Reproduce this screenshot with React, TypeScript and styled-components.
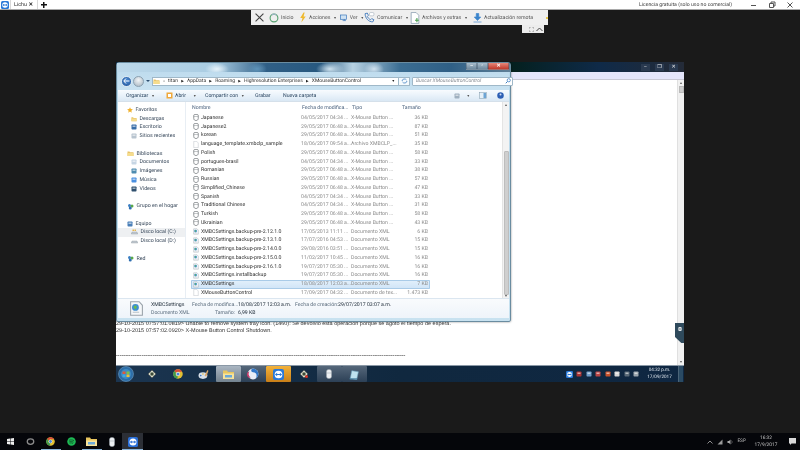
import React from "react";
import styled, { createGlobalStyle } from "styled-components";

const Global = createGlobalStyle`
  html, body { margin: 0; padding: 0; background: #1a1a1a; overflow: hidden; }
  * { box-sizing: border-box; }
`;

const UI = `Roboto, "Open Sans", "Liberation Sans", sans-serif`;

const Root = styled.div`
  width: 800px; height: 450px; background: #1a1a1a; display: flex; flex-direction: column;
  font-family: ${UI}; overflow: hidden; position: relative; filter: blur(0.38px);
  text-rendering: geometricPrecision;
`;

/* ---------- top bar of the remote-control app ---------- */
const TopBar = styled.div`
  height: 10px; flex: none; background: #fff; border-bottom: 1px solid #a9a9a9; display: flex; align-items: center;
`;
const AppLogo = styled.div`width: 10px; display: flex; justify-content: center;`;
const Tab = styled.div`
  width: 28px; height: 9px; border-left: 1px solid #d8d8d8; border-right: 1px solid #d8d8d8; display: flex; align-items: center;
  justify-content: space-between; padding: 0 4px 0 3px; font-size: 5.4px; color: #333; position: relative;
`;
const TabClose = styled.span`font-size: 5.5px; font-weight: 700; color: #222;`;
const PlusMark = styled.div`
  margin-left: 3px; width: 6px; height: 6px; flex: none;
  background: linear-gradient(#111, #111) center / 6px 1.5px no-repeat, linear-gradient(#111, #111) center / 1.5px 6px no-repeat;
`;
const Licence = styled.span`margin-left: auto; margin-right: 18px; font-size: 5.15px; color: #444;`;
const WinCtl = styled.div`display: flex; gap: 10px; padding-right: 6px; align-items: center;`;

/* ---------- stage ---------- */
const Stage = styled.div`flex: 1; position: relative;`;

const RemoteBar = styled.div`
  position: absolute; left: 251px; top: 0; width: 297px; height: 15px; background: #efefef;
  display: flex; align-items: center; padding-left: 4px; font-size: 5.2px; color: #555;
`;
const RemoteItem = styled.div<{ $w: number }>`
  width: ${(p) => p.$w}px; display: flex; align-items: center; gap: 2px; white-space: nowrap; flex: none;
`;
const Caret = styled.span<{ $push?: number }>`font-size: 3.6px; color: #555; margin-left: ${(p) => p.$push ?? 1}px;`;
const BarTab = styled.div`
  position: absolute; left: 271px; top: 15px; width: 22px; height: 8px; background: #ececec;
  display: flex; align-items: center; justify-content: flex-end; gap: 2px; padding-right: 1px;
`;

const Remote = styled.div`
  position: absolute; left: 116px; top: 52px; width: 568px; height: 320px; display: flex; flex-direction: column;
`;

/* background window */
const BackTitle = styled.div`
  height: 10px; flex: none; display: flex; justify-content: flex-end; align-items: center; gap: 5px; padding-right: 6px;
  background: linear-gradient(90deg, #0b2a44 0, #04201f 70%, #0f2a48 85%, #242b38 100%);
`;
const BackCtl = styled.div`
  width: 9px; height: 7px; background: #2a3a50; display: flex; align-items: center; justify-content: center; color: #eee; font-size: 5px;
`;
const BackBody = styled.div`flex: 1; background: #fff; display: flex; flex-direction: column; position: relative; min-height: 0;`;
const Strip = styled.div`height: 8px; flex: none; background: #e5e6fb; border-bottom: 1px solid #c9c9d6;`;
const BackScroll = styled.div`
  position: absolute; right: 0; top: 8px; bottom: 0; width: 7px; background: #f1f1f1; border-left: 1px solid #e0e0e0;
  display: flex; flex-direction: column; align-items: center; padding: 2px 0;
`;
const BackThumb = styled.div`width: 5px; height: 7px; background: #cdcdcd; border: 1px solid #bbb; margin-top: 2px;`;
const ScrollArrow = styled.span<{ $down?: boolean }>`
  width: 0; height: 0; border-left: 1.5px solid transparent; border-right: 1.5px solid transparent; flex: none;
  ${(p) => (p.$down ? "border-top: 2px solid #555; margin-top: auto;" : "border-bottom: 2px solid #555;")}
`;
const LogText = styled.div`
  margin-top: auto; padding-bottom: 5.5px; font-family: "Liberation Sans", Arial, sans-serif; font-size: 5.5px;
  color: #333; line-height: 7px; white-space: nowrap; display: flex; flex-direction: column;
`;
const Dashes = styled.span`margin-top: 18px; display: block; font-weight: 700; color: #555;`;
const SideTab = styled.div`
  position: absolute; right: 0; top: 251px; width: 9px; height: 20px; background: #2f4a5c;
  clip-path: polygon(0 0, 100% 0, 100% 100%, 70% 100%, 0 70%); display: flex; justify-content: center; padding-top: 3px;
`;

/* remote win7 taskbar */
const Win7Bar = styled.div`
  height: 17px; flex: none; display: flex; align-items: stretch; border-top: 1px solid #8a98a6;
  background: linear-gradient(90deg, #1b3550 0, #10283f 50%, #0f2742 100%);
`;
const Orb = styled.div`width: 20px; margin-right: 3.2px; display: flex; align-items: center; justify-content: center;`;
const TaskBtn = styled.div<{ $tone?: "glass" | "light" | "orange"; $w?: number }>`
  width: ${(p) => p.$w ?? 25.6}px; flex: none; display: flex; align-items: center; justify-content: center;
  ${(p) =>
    p.$tone === "light"
      ? "background: linear-gradient(180deg,#aab6c2,#74838f); border-radius: 1px;"
      : p.$tone === "glass"
      ? "background: linear-gradient(180deg,#55677a,#2c4056); border-radius: 1px;"
      : p.$tone === "orange"
      ? "background: linear-gradient(180deg,#f3b23a,#c97f18); border-radius: 1px;"
      : ""}
`;
const Tray = styled.div`margin-left: auto; display: flex; align-items: center; gap: 3.5px; padding-right: 1px;`;
const Win7Clock = styled.div`
  width: 30px; margin-left: 2px; text-align: center; color: #dfe7ee; font-size: 4.6px; line-height: 7px;
`;
const ShowDesk = styled.div`width: 5px; align-self: stretch; background: #2a4a63; border-left: 1px solid #4b6478;`;

/* explorer */
const Explorer = styled.div`
  position: absolute; left: 0; top: 0; width: 395px; height: 260px; display: flex; flex-direction: column;
  border: 1px solid #6a8ca0; border-radius: 3px 3px 2px 2px; padding: 0 1px 3px;
  background: linear-gradient(180deg, #b7d7ea 0, #c8e2f0 100%);
  box-shadow: 0 0 2px rgba(0,0,0,.5);
`;
const ExTitle = styled.div`
  height: 9px; flex: none; margin: 0 -1px; display: flex; justify-content: flex-end; padding-right: 1px;
  background:
    radial-gradient(ellipse 12px 6px at 100px 6px, #e8f4fb 0, transparent 100%),
    radial-gradient(ellipse 10px 6px at 140px 6px, #5e93b8 0, transparent 100%),
    radial-gradient(ellipse 14px 7px at 213px 6px, #cfe3ef 0, transparent 100%),
    radial-gradient(ellipse 10px 7px at 257px 6px, #d0e2ef 0, transparent 100%),
    linear-gradient(90deg, #bcd8ea 0, #a9cce2 25%, #305f86 38%, #27587f 52%, #b7d2e3 60%, #3b6d92 72%, #2f5f85 85%, #5f8098 100%);
`;
const ExCtlGroup = styled.div`display: flex; height: 7px;`;
const ExCtl = styled.div<{ $w: number; $red?: boolean }>`
  width: ${(p) => p.$w}px; display: flex; align-items: center; justify-content: center; color: #fff; font-size: 5px; font-weight: 700;
  background: ${(p) => (p.$red ? "linear-gradient(180deg,#e8877a,#c0392b)" : "linear-gradient(180deg,#a8bccb,#6f8a9e)")};
  border: 1px solid rgba(50,70,90,.35); border-top: 0;
`;
const ExNav = styled.div`
  height: 18px; flex: none; display: flex; align-items: center; padding: 0 1px 0 3px;
  background: linear-gradient(180deg,#bfdcee,#c9e2f1);
`;
const NavBack = styled.div`
  width: 11px; height: 11px; border-radius: 50%; background: radial-gradient(circle at 50% 40%, #4f8fd6, #1d4f94); border: 1px solid #dbe8f2;
  display: flex; align-items: center; justify-content: center; flex: none;
`;
const NavFwd = styled.div`
  width: 11px; height: 11px; border-radius: 50%; margin-left: 1px; background: radial-gradient(circle at 50% 35%, #f2f5f7, #a5b4c0); border: 1px solid #8ba0b0; flex: none;
`;
const NavDrop = styled.span`
  width: 0; height: 0; border-left: 2px solid transparent; border-right: 2px solid transparent; border-top: 2px solid #2d4f70; margin: 0 2px 0 2px; flex: none;
`;
const Address = styled.div`
  width: 247px; height: 9px; flex: none; background: #fff; border: 1px solid #9fb8c8; display: flex; align-items: center;
  padding: 0 3px 0 0; font-size: 5px; color: #333; gap: 3.2px; white-space: nowrap;
`;
const Crumb = styled.span``;
const CrumbArrow = styled.span`font-size: 3.4px; color: #222;`;
const AddrEnd = styled.span`margin-left: auto; font-size: 3.6px; color: #222;`;
const Refresh = styled.div`
  width: 11px; height: 9px; flex: none; background: #f5fafd; border: 1px solid #9fb8c8; border-left: 0; display: flex; align-items: center; justify-content: center;
`;
const Search = styled.div`
  width: 101px; height: 9px; flex: none; margin-left: 2px; background: #fff; border: 1px solid #9fb8c8; border-radius: 1px; display: flex; align-items: center;
  justify-content: space-between; padding: 0 1px 0 3px; font-size: 5.1px; font-style: italic; color: #8a8f96; white-space: nowrap;
`;
const ExToolbar = styled.div`
  height: 12px; flex: none; display: flex; align-items: center; padding-left: 8px; padding-right: 5px; font-size: 5.2px; color: #2a4560;
  background: linear-gradient(180deg,#f8fbfe 0,#e9f2fa 50%,#dae8f4 100%); border-bottom: 1px solid #d5e0ea;
`;
const ToolBtn = styled.div<{ $w: number }>`width: ${(p) => p.$w}px; display: flex; align-items: center; gap: 2px; flex: none; white-space: nowrap;`;
const ToolEnd = styled.div`margin-left: auto; display: flex; align-items: center; gap: 5px;`;
const ToolIcon = styled.svg<{ $push: number }>`margin-left: ${(p) => p.$push}px;`;
const ExMain = styled.div`height: 196px; flex: none; display: flex; background: #fff;`;
const Sidebar = styled.div`width: 68px; flex: none; padding-top: 3.6px; border-right: 1px solid #e8eef4;`;
const SideRow = styled.div<{ $depth?: number; $gap?: number; $sel?: boolean }>`
  height: 8.75px; margin-top: ${(p) => (p.$gap ? p.$gap * 8.75 : 0)}px; display: flex; align-items: center; gap: 2.5px;
  padding-left: ${(p) => (p.$depth ? 13 : 9)}px; font-size: 5.25px; color: #3a4a5c; white-space: nowrap;
  ${(p) => (p.$sel ? "background: #eef0f2;" : "")}
`;
const Content = styled.div`flex: 1; min-width: 0; display: flex; flex-direction: column; padding-left: 5px;`;
const HeadRow = styled.div`
  height: 11.6px; flex: none; display: grid; grid-template-columns: 110px 50px 50px 29px; align-items: center; font-size: 5.2px; color: #4e6580;
`;
const HeadCell = styled.div`padding-left: 1px; white-space: nowrap; height: 100%; display: flex; align-items: center;`;
const FileRow = styled.div<{ $sel?: boolean }>`
  height: 8.75px; width: 239px; flex: none; display: grid; grid-template-columns: 110px 50px 50px 29px; align-items: center; font-size: 5.2px; color: #8c8c8c;
  white-space: nowrap; border-radius: 1px;
  ${(p) =>
    p.$sel ? "background: linear-gradient(180deg,#e3f0fb,#cfe4f7); box-shadow: inset 0 0 0 1px #a9cbe8;" : ""}
`;
const NameCell = styled.div`display: flex; align-items: center; gap: 2.5px; padding-left: 1.5px; color: #333;`;
const DateCell = styled.div``;
const SizeCell = styled.div`text-align: right; padding-right: 2px;`;
const VScroll = styled.div`
  width: 7px; flex: none; background: #f3f3f3; border-left: 1px solid #e4e4e4; display: flex; flex-direction: column; align-items: center; padding: 2px 0;
`;
const VThumb = styled.div`width: 5px; height: 144px; margin-top: 45px; background: #cfcfcf; border: 1px solid #bdbdbd; border-radius: 1px; flex: none;`;
const Details = styled.div`
  height: 20px; flex: none; background: linear-gradient(180deg,#f9fbfd,#eef4fa); border-top: 1px solid #dbe6f0; display: flex; align-items: center;
  padding-left: 11px; font-size: 5.2px; color: #5f7080; gap: 7px;
`;
const DetailGrid = styled.div`
  display: grid; grid-template-columns: 41px 46px 57px 43px 60px; grid-template-rows: 8px 8px; align-items: center; white-space: nowrap;
`;
const DetailStrong = styled.span`color: #23303d;`;
const DetailLabel = styled.span<{ $right?: boolean }>`
  ${(p) => (p.$right ? "text-align: right; padding-right: 3px;" : "")}
`;

/* win10 bottom taskbar */
const WinBar = styled.div`
  height: 17px; flex: none; background: #05060a; display: flex; align-items: stretch;
`;
const WinCell = styled.div<{ $active?: boolean; $line?: boolean }>`
  width: 20.4px; flex: none; display: flex; align-items: center; justify-content: center;
  ${(p) => (p.$active ? "background: #2c2f36;" : "")}
  ${(p) => (p.$line ? "box-shadow: inset 0 -1px 0 #8ab4d8;" : "")}
`;
const WinTray = styled.div`margin-left: auto; display: flex; align-items: center; gap: 4px; color: #b5b5b5; font-size: 4.8px;`;
const WinClock = styled.div`width: 28px; margin-left: 2px; text-align: center; font-size: 4.8px; line-height: 7px; color: #c6c6c6;`;
const WinNote = styled.div`width: 16px; display: flex; justify-content: center;`;

/* ---------- icons ---------- */
type IconProps = { s?: number };
const TvIcon = ({ s = 8, bg = "#2a79d8" }: IconProps & { bg?: string }) => (
  <svg width={s} height={s} viewBox="0 0 16 16">
    <rect width="16" height="16" rx="3" fill={bg} />
    <circle cx="8" cy="8" r="5.6" fill="#fff" />
    <path d="M2.8 8 6 5.6v1.5h4V5.6L13.2 8 10 10.4V8.9H6v1.5z" fill={bg} />
  </svg>
);
const MouseFile = () => (
  <svg width="6" height="7" viewBox="0 0 12 14">
    <path d="M1.5 2.5C1.5 1 4 1 6 1s4.500 0 4.500 1.500V9c0 2.500-2 4-4.500 4s-4.500-1.500-4.500-4z" fill="#fff" stroke="#6f7478" strokeWidth="1.5" />
    <path d="M1.500 5h9" stroke="#8b9094" strokeWidth="1" />
  </svg>
);
const PageFile = () => (
  <svg width="6" height="7" viewBox="0 0 12 14">
    <path d="M1.500.7h6L10.500 4v9.300h-9z" fill="#fff" stroke="#b9bfc5" />
  </svg>
);
const XmlFile = ({ s = 7 }: IconProps) => (
  <svg width={s > 7 ? s : 6} height={s} viewBox="0 0 14 14">
    <path d="M1.500.7h8L12.500 4v9.300h-11z" fill="#f6f8fa" stroke="#9aa3ab" />
    <circle cx="6" cy="6" r="3.200" fill="#3f8fd2" />
    <path d="M4 5.500 6 4l1.500 1.500L6 8z" fill="#6bbb4a" />
    <path d="M3.500 10.500h6" stroke="#bcc3ca" />
  </svg>
);
const Folder = ({ s = 7 }: IconProps) => (
  <svg width={s} height={s} viewBox="0 0 14 14">
    <path d="M1 3h4l1 1.500h7V12H1z" fill="#e8c266" />
    <path d="M1 6h12v6H1z" fill="#f5dc8c" />
  </svg>
);
const Dot = ({ c, s = 6 }: { c: string; s?: number }) => (
  <svg width={s} height={s} viewBox="0 0 12 12">
    <rect x="1" y="1" width="10" height="10" rx="1.500" fill={c} />
    <rect x="3" y="3" width="6" height="3" fill="#fff" opacity=".55" />
  </svg>
);
const Star = () => (
  <svg width="6" height="6" viewBox="0 0 12 12">
    <path d="M6 .5 7.700 4.200l4 .4-3 2.700.9 4L6 9.200l-3.600 2.100.9-4-3-2.700 4-.4z" fill="#f0b02c" />
  </svg>
);
const Globe = () => (
  <svg width="7" height="7" viewBox="0 0 14 14">
    <circle cx="5" cy="5" r="3" fill="#3b7fc4" />
    <circle cx="10" cy="6" r="3" fill="#58a84a" />
    <circle cx="6.500" cy="10" r="3" fill="#2f6fb0" />
  </svg>
);
const Disk = ({ sys }: { sys?: boolean }) => (
  <svg width="7" height="6" viewBox="0 0 14 12">
    <path d="M2 6h10l1.500 4h-13z" fill="#c4ccd3" stroke="#7f8b95" strokeWidth=".7" />
    {sys && <path d="M3 1h3v3H3zM7 1h3v3H7z" fill="#e7b54a" />}
  </svg>
);
const Chrome = ({ s = 10 }: IconProps) => (
  <svg width={s} height={s} viewBox="0 0 20 20">
    <circle cx="10" cy="10" r="9.500" fill="#e3c033" />
    <path d="M10 .5a9.500 9.500 0 0 1 8.230 4.750H10a4.750 4.750 0 0 0-4.100 2.400L2.500 4.200A9.500 9.500 0 0 1 10 .5z" fill="#d94a3c" />
    <path d="M2.500 4.200 5.900 7.650a4.750 4.750 0 0 0 4.100 7.100L8 19.300A9.500 9.500 0 0 1 2.500 4.200z" fill="#3d9a52" />
    <circle cx="10" cy="10" r="4" fill="#fff" />
    <circle cx="10" cy="10" r="3.100" fill="#4a86d8" />
  </svg>
);
const Diamond = ({ red }: { red?: boolean }) => (
  <svg width="10" height="10" viewBox="0 0 20 20">
    <path d="M10 2 18 10l-8 8-8-8z" fill="#d8dcc8" stroke="#333" />
    <path d="M7 7h6v6H7z" fill="#3c4a38" />
    {red && <circle cx="15" cy="15" r="3" fill="#d83a2a" />}
  </svg>
);
const Palette = () => (
  <svg width="11" height="11" viewBox="0 0 20 20">
    <ellipse cx="9" cy="12" rx="8" ry="6" fill="#d8dfe8" />
    <circle cx="5" cy="12" r="1.500" fill="#3a78c8" />
    <circle cx="9" cy="9" r="1.500" fill="#e2bc3a" />
    <path d="M12 12 17 2l2 1-4 11z" fill="#d9a468" />
  </svg>
);
const Swirl = () => (
  <svg width="12" height="12" viewBox="0 0 20 20">
    <circle cx="10" cy="10" r="9" fill="#e9eef6" />
    <path d="M10 1a9 9 0 0 1 0 18 6 6 0 0 0 0-12 3 3 0 0 1 0-6z" fill="#3278c8" />
    <path d="M4 6a7 7 0 0 0 2 10 5 5 0 0 1-2-10z" fill="#c83a6a" />
  </svg>
);
const MouseApp = ({ s = 10 }: IconProps) => (
  <svg width={s} height={s} viewBox="0 0 20 20">
    <rect x="5" y="1" width="10" height="18" rx="4" fill="#eceff2" stroke="#9aa3ab" />
    <path d="M5 8h10" stroke="#9aa3ab" />
  </svg>
);
const Notes = () => (
  <svg width="12" height="11" viewBox="0 0 22 20">
    <path d="M4 18 7 3l12 2-3 14z" fill="#bfe2ee" stroke="#6fa6c0" />
    <path d="M3 18h14" stroke="#4a80a0" strokeWidth="2" />
  </svg>
);
const WinFolder = () => (
  <svg width="13" height="11" viewBox="0 0 26 22">
    <path d="M2 3h8l2 3h12v14H2z" fill="#e9c65f" />
    <path d="M2 9h22v11H2z" fill="#f7e39b" />
    <path d="M6 12h14v5H6z" fill="#6ba9d8" />
  </svg>
);
const OrbIcon = () => (
  <svg width="16" height="16" viewBox="0 0 32 32">
    <circle cx="16" cy="16" r="15" fill="#2d6ea8" stroke="#7fa8c8" />
    <circle cx="16" cy="16" r="10" fill="#3f8bc4" />
    <path d="M9 11h6v5H9z" fill="#e05a3a" />
    <path d="M17 11h6v5h-6z" fill="#7cc24a" />
    <path d="M9 17h6v5H9z" fill="#3fa8e2" />
    <path d="M17 17h6v5h-6z" fill="#f1c232" />
  </svg>
);

/* ---------- data ---------- */
const M = "X-Mouse Button ...";
const X = "Documento XML";
const files: { n: string; d: string; t: string; s: string; k: "m" | "p" | "x"; sel?: boolean }[] = [
  { n: "Japanese", d: "04/05/2017 04:34 ...", t: M, s: "36 KB", k: "m" },
  { n: "Japanese2", d: "29/05/2017 06:48 a...", t: M, s: "87 KB", k: "m" },
  { n: "korean", d: "29/05/2017 06:48 a...", t: M, s: "51 KB", k: "m" },
  { n: "language_template.xmbclp_sample", d: "18/06/2017 09:54 a...", t: "Archivo XMBCLP_...", s: "35 KB", k: "p" },
  { n: "Polish", d: "29/05/2017 06:48 a...", t: M, s: "58 KB", k: "m" },
  { n: "portugues-brasil", d: "04/05/2017 04:34 ...", t: M, s: "33 KB", k: "m" },
  { n: "Romanian", d: "29/05/2017 06:48 a...", t: M, s: "38 KB", k: "m" },
  { n: "Russian", d: "29/05/2017 06:48 a...", t: M, s: "57 KB", k: "m" },
  { n: "Simplified_Chinese", d: "29/05/2017 06:48 a...", t: M, s: "47 KB", k: "m" },
  { n: "Spanish", d: "04/05/2017 04:34 ...", t: M, s: "33 KB", k: "m" },
  { n: "Traditional Chinese", d: "04/05/2017 04:34 ...", t: M, s: "31 KB", k: "m" },
  { n: "Turkish", d: "29/05/2017 06:48 a...", t: M, s: "58 KB", k: "m" },
  { n: "Ukrainian", d: "29/05/2017 06:48 a...", t: M, s: "43 KB", k: "m" },
  { n: "XMBCSettings.backup-pre-2.12.1.0", d: "17/05/2013 11:11 ...", t: X, s: "6 KB", k: "x" },
  { n: "XMBCSettings.backup-pre-2.13.1.0", d: "17/07/2016 04:53 ...", t: X, s: "15 KB", k: "x" },
  { n: "XMBCSettings.backup-pre-2.14.0.0", d: "29/08/2016 03:51 ...", t: X, s: "15 KB", k: "x" },
  { n: "XMBCSettings.backup-pre-2.15.0.0", d: "11/02/2017 10:45 ...", t: X, s: "16 KB", k: "x" },
  { n: "XMBCSettings.backup-pre-2.16.1.0", d: "19/07/2017 05:30 ...", t: X, s: "16 KB", k: "x" },
  { n: "XMBCSettings.installbackup", d: "19/07/2017 05:30 ...", t: X, s: "16 KB", k: "x" },
  { n: "XMBCSettings", d: "18/08/2017 12:03 a...", t: X, s: "7 KB", k: "x", sel: true },
  { n: "XMouseButtonControl", d: "17/09/2017 04:32 ...", t: "Documento de tex...", s: "1.473 KB", k: "p" },
];

const crumbs = ["titan", "AppData", "Roaming", "Highresolution Enterprises", "XMouseButtonControl"];

const side: { l: string; icon: React.ReactNode; depth?: boolean; gap?: number; sel?: boolean }[] = [
  { l: "Favoritos", icon: <Star /> },
  { l: "Descargas", icon: <Folder s={6} />, depth: true },
  { l: "Escritorio", icon: <Dot c="#3a6ea8" />, depth: true },
  { l: "Sitios recientes", icon: <Dot c="#b8c4cf" />, depth: true },
  { l: "Bibliotecas", icon: <Folder />, gap: 1 },
  { l: "Documentos", icon: <Dot c="#c7d6e4" />, depth: true },
  { l: "Imágenes", icon: <Dot c="#4e8cb0" />, depth: true },
  { l: "Música", icon: <Dot c="#4a8fe0" />, depth: true },
  { l: "Vídeos", icon: <Dot c="#30506e" />, depth: true },
  { l: "Grupo en el hogar", icon: <Globe />, gap: 1 },
  { l: "Equipo", icon: <Dot c="#4a7fb8" />, gap: 1 },
  { l: "Disco local (C:)", icon: <Disk sys />, depth: true, sel: true },
  { l: "Disco local (D:)", icon: <Disk />, depth: true },
  { l: "Red", icon: <Globe />, gap: 1 },
];

const fileIcon = (k: "m" | "p" | "x") => (k === "m" ? <MouseFile /> : k === "p" ? <PageFile /> : <XmlFile />);

export default function App() {
  return (
    <Root>
      <Global />
      <TopBar>
        <AppLogo><TvIcon s={8} /></AppLogo>
        <Tab>Lichu<TabClose>✕</TabClose></Tab>
        <PlusMark />
        <Licence>Licencia gratuita (solo uso no comercial)</Licence>
        <WinCtl>
          <svg width="8" height="8" viewBox="0 0 8 8"><path d="M1 4.500h5" stroke="#555" /></svg>
          <svg width="8" height="8" viewBox="0 0 8 8"><path d="M1.500 2.500h4v4h-4zM3 2.500V1h4v4H5.500" fill="none" stroke="#555" /></svg>
          <svg width="8" height="8" viewBox="0 0 8 8"><path d="M1.500 1.500l5 5M6.500 1.500l-5 5" stroke="#555" /></svg>
        </WinCtl>
      </TopBar>

      <Stage>
        <RemoteBar>
          <RemoteItem $w={14}>
            <svg width="9" height="9" viewBox="0 0 8 8"><path d="M.5.500l7 7M7.500.500l-7 7" stroke="#444" strokeWidth="1" /></svg>
          </RemoteItem>
          <RemoteItem $w={30}>
            <svg width="10" height="10" viewBox="0 0 18 18"><circle cx="9" cy="9" r="7" fill="none" stroke="#57a070" strokeWidth="2" /><path d="M5 3.500A7 7 0 0 1 13 3.500" stroke="#9db5c4" strokeWidth="2" fill="none" /></svg>
            <span>Inicio</span>
          </RemoteItem>
          <RemoteItem $w={41}>
            <svg width="8" height="11" viewBox="0 0 14 20"><path d="M8 1 2 11h4l-2 8 8-11H8l2-7z" fill="#efb92e" /></svg>
            <span>Acciones</span><Caret>▼</Caret>
          </RemoteItem>
          <RemoteItem $w={24}>
            <svg width="10" height="10" viewBox="0 0 18 18"><rect x="1" y="2" width="14" height="10" fill="#cfe2f2" stroke="#2f6fb8" strokeWidth="1.500" /><path d="M6 15h8M10 12v3" stroke="#2f6fb8" strokeWidth="1.500" /></svg>
            <span>Ver</span><Caret>▼</Caret>
          </RemoteItem>
          <RemoteItem $w={46}>
            <svg width="11" height="11" viewBox="0 0 20 20"><path d="M2 3c0 8 6 15 14 15l2-4-4-2-2 2c-3-1-5-4-6-6l2-2-2-4z" fill="none" stroke="#2f6fb8" strokeWidth="1.500" /><rect x="10" y="1" width="8" height="6" rx="2" fill="#fff" stroke="#9aa7b3" /></svg>
            <span>Comunicar</span><Caret>▼</Caret>
          </RemoteItem>
          <RemoteItem $w={63}>
            <svg width="10" height="12" viewBox="0 0 18 22"><path d="M2 1h9l5 5v15H2z" fill="#fff" stroke="#7f95a8" strokeWidth="1.300" /><path d="M9 15h7M12.500 11v8" stroke="#4aa050" strokeWidth="2" /></svg>
            <span>Archivos y extras</span><Caret>▼</Caret>
          </RemoteItem>
          <RemoteItem $w={73}>
            <svg width="9" height="10" viewBox="0 0 18 20"><path d="M6.500 1h5v7h4L9 15 2.500 8h4zM1 18h16" fill="#3a84cc" stroke="#3a84cc" strokeWidth="1.300" /></svg>
            <span>Actualización remota</span>
          </RemoteItem>
          <svg width="8" height="8" viewBox="0 0 16 16"><circle cx="8" cy="8" r="7.500" fill="#eec10c" /><path d="M4 6h2v2H4zM10 6h2v2h-2zM4 10.500h8v1.500H4z" fill="#a3852a" /></svg>
          <BarTab>
            <svg width="5" height="5" viewBox="0 0 5 5"><path d="M0 0h2M3 0h2M0 5h2M3 5h2M0 0v2M5 0v2M0 3v2M5 3v2" stroke="#8a8a8a" strokeWidth=".7" /></svg>
            <svg width="7" height="5" viewBox="0 0 7 5"><path d="M.5 4 3.500 1l3 3" fill="none" stroke="#444" /></svg>
          </BarTab>
        </RemoteBar>

        <Remote>
          <BackTitle>
            <BackCtl>–</BackCtl>
            <BackCtl>❐</BackCtl>
            <BackCtl>✕</BackCtl>
          </BackTitle>
          <BackBody>
            <Strip />
            <BackScroll>
              <ScrollArrow />
              <BackThumb />
              <ScrollArrow $down />
            </BackScroll>
            <LogText>
              <span>29-10-2015 07:57:01.0819&gt; Unable to remove system tray icon. (1460): Se devolvió esta operación porque se agotó el tiempo de espera.</span>
              <span>29-10-2015 07:57:02.0920&gt; X-Mouse Button Control Shutdown.</span>
              <Dashes>{"-".repeat(158)}</Dashes>
            </LogText>
            <SideTab><TvIcon s={6} bg="#2f4a5c" /></SideTab>
          </BackBody>
          <Win7Bar>
            <Orb><OrbIcon /></Orb>
            <TaskBtn><Diamond /></TaskBtn>
            <TaskBtn><Chrome /></TaskBtn>
            <TaskBtn><Palette /></TaskBtn>
            <TaskBtn $tone="light" $w={25}><WinFolder /></TaskBtn>
            <TaskBtn $tone="glass" $w={25}><Swirl /></TaskBtn>
            <TaskBtn $tone="orange" $w={25}><TvIcon s={11} /></TaskBtn>
            <TaskBtn><Diamond red /></TaskBtn>
            <TaskBtn $tone="glass" $w={25}><MouseApp /></TaskBtn>
            <TaskBtn $tone="glass" $w={25}><Notes /></TaskBtn>
            <Tray>
              <TvIcon s={7} />
              <Dot c="#a33" />
              <Dot c="#6f9cc8" />
              <Dot c="#b44" />
              <Dot c="#c8502a" />
              <Dot c="#d8d8d8" />
              <Dot c="#5a6a78" />
              <Dot c="#9aa4ac" />
              <Win7Clock>04:32 p.m.<br />17/09/2017</Win7Clock>
              <ShowDesk />
            </Tray>
          </Win7Bar>

          <Explorer>
            <ExTitle>
              <ExCtlGroup>
                <ExCtl $w={11}>–</ExCtl>
                <ExCtl $w={11}>▫</ExCtl>
                <ExCtl $w={21} $red>✕</ExCtl>
              </ExCtlGroup>
            </ExTitle>
            <ExNav>
              <NavBack>
                <svg width="7" height="6" viewBox="0 0 14 12"><path d="M6 1 1.500 6 6 11M2 6h11" fill="none" stroke="#fff" strokeWidth="2" /></svg>
              </NavBack>
              <NavFwd />
              <NavDrop />
              <Address>
                <Folder s={7} />
                <CrumbArrow>«</CrumbArrow>
                {crumbs.map((c, i) => (
                  <React.Fragment key={c}>
                    <Crumb>{c}</Crumb>
                    {i < crumbs.length - 1 && <CrumbArrow>▶</CrumbArrow>}
                  </React.Fragment>
                ))}
                <AddrEnd>▼</AddrEnd>
              </Address>
              <Refresh>
                <svg width="7" height="6" viewBox="0 0 14 12"><path d="M2 6a5 5 0 0 1 9-2M12 6a5 5 0 0 1-9 2" fill="none" stroke="#3a7cc0" strokeWidth="1.500" /></svg>
              </Refresh>
              <Search>
                Buscar XMouseButtonControl
                <svg width="6" height="6" viewBox="0 0 12 12"><circle cx="7.500" cy="4.500" r="3.200" fill="none" stroke="#3a7cc0" strokeWidth="1.500" /><path d="M5 7 1.500 10.500" stroke="#3a7cc0" strokeWidth="2" /></svg>
              </Search>
            </ExNav>
            <ExToolbar>
              <ToolBtn $w={40}>Organizar<Caret>▼</Caret></ToolBtn>
              <ToolBtn $w={39}>
                <svg width="7" height="7" viewBox="0 0 14 14"><rect x="1" y="1" width="12" height="12" fill="#f0a83a" /><path d="M4 4h6v6H4z" fill="#fff" /></svg>
                Abrir<Caret $push={5}>▼</Caret>
              </ToolBtn>
              <ToolBtn $w={50}>Compartir con<Caret>▼</Caret></ToolBtn>
              <ToolBtn $w={28}>Grabar</ToolBtn>
              <ToolBtn $w={40}>Nueva carpeta</ToolBtn>
              <ToolEnd>
                <Dot c="#9fb0bf" />
                <Caret>▼</Caret>
                <ToolIcon $push={4} width="8" height="7" viewBox="0 0 16 14"><rect x="1" y="1" width="14" height="12" fill="#e6f0f8" stroke="#7f97aa" /><rect x="9" y="2" width="5" height="10" fill="#6da4d4" /></ToolIcon>
                <ToolIcon $push={5} width="7" height="7" viewBox="0 0 14 14"><circle cx="7" cy="7" r="6.500" fill="#2e5fb4" /><circle cx="7" cy="5" r="2" fill="#cfdcf2" /></ToolIcon>
              </ToolEnd>
            </ExToolbar>
            <ExMain>
              <Sidebar>
                {side.map((s) => (
                  <SideRow key={s.l} $depth={s.depth ? 1 : 0} $gap={s.gap} $sel={s.sel}>
                    {s.icon}<span>{s.l}</span>
                  </SideRow>
                ))}
              </Sidebar>
              <Content>
                <HeadRow>
                  <HeadCell>Nombre</HeadCell>
                  <HeadCell>Fecha de modifica...</HeadCell>
                  <HeadCell>Tipo</HeadCell>
                  <HeadCell>Tamaño</HeadCell>
                </HeadRow>
                {files.map((f) => (
                  <FileRow key={f.n} $sel={f.sel}>
                    <NameCell>{fileIcon(f.k)}<span>{f.n}</span></NameCell>
                    <DateCell>{f.d}</DateCell>
                    <DateCell>{f.t}</DateCell>
                    <SizeCell>{f.s}</SizeCell>
                  </FileRow>
                ))}
              </Content>
              <VScroll>
                <ScrollArrow />
                <VThumb />
                <ScrollArrow $down />
              </VScroll>
            </ExMain>
            <Details>
              <XmlFile s={15} />
              <DetailGrid>
                <DetailStrong>XMBCSettings</DetailStrong>
                <DetailLabel>Fecha de modifica...</DetailLabel>
                <DetailStrong>18/08/2017 12:03 a.m.</DetailStrong>
                <DetailLabel>Fecha de creación:</DetailLabel>
                <DetailStrong>29/07/2017 03:07 a.m.</DetailStrong>
                <DetailLabel>Documento XML</DetailLabel>
                <DetailLabel $right>Tamaño:</DetailLabel>
                <DetailStrong>6,99 KB</DetailStrong>
              </DetailGrid>
            </Details>
          </Explorer>
        </Remote>
      </Stage>

      <WinBar>
        <WinCell>
          <svg width="7" height="7" viewBox="0 0 14 14"><path d="M0 2l6-1v5.500H0zM7 1l7-1v6.500H7zM0 7.500h6V13l-6-1zM7 7.500h7V14l-7-1z" fill="#eee" /></svg>
        </WinCell>
        <WinCell>
          <svg width="9" height="7" viewBox="0 0 18 14"><ellipse cx="9" cy="7" rx="6.500" ry="5.500" fill="none" stroke="#8c8c8c" strokeWidth="2.500" /></svg>
        </WinCell>
        <WinCell $line><Chrome s={9} /></WinCell>
        <WinCell>
          <svg width="9" height="9" viewBox="0 0 18 18"><circle cx="9" cy="9" r="8.500" fill="#1db954" /><path d="M4 6.500c3-1 7-1 10 .8M4.500 9.500c3-.8 6-.6 8.500.8M5 12c2.500-.6 5-.4 7 .8" fill="none" stroke="#0a3a1a" strokeWidth="1.300" /></svg>
        </WinCell>
        <WinCell $line><WinFolder /></WinCell>
        <WinCell><MouseApp /></WinCell>
        <WinCell $active $line><TvIcon s={10} bg="#2a6fd8" /></WinCell>
        <WinTray>
          <svg width="6" height="4" viewBox="0 0 12 8"><path d="M1 7l5-5 5 5" fill="none" stroke="#bbb" strokeWidth="1.500" /></svg>
          <svg width="6" height="6" viewBox="0 0 12 12"><path d="M1 11 11 1v10z" fill="#9a9a9a" /></svg>
          <svg width="6" height="6" viewBox="0 0 12 12"><path d="M1 4h3l3-3v10L4 8H1z" fill="#aaa" /><path d="M9 3c1.500 2 1.500 4 0 6" fill="none" stroke="#aaa" /></svg>
          <span>ESP</span>
          <WinClock>16:32<br />17/9/2017</WinClock>
          <WinNote>
            <svg width="9" height="9" viewBox="0 0 18 18"><path d="M2 2h14v11H7l-3 3v-3H2z" fill="#d8d8d8" /></svg>
          </WinNote>
        </WinTray>
      </WinBar>
    </Root>
  );
}
